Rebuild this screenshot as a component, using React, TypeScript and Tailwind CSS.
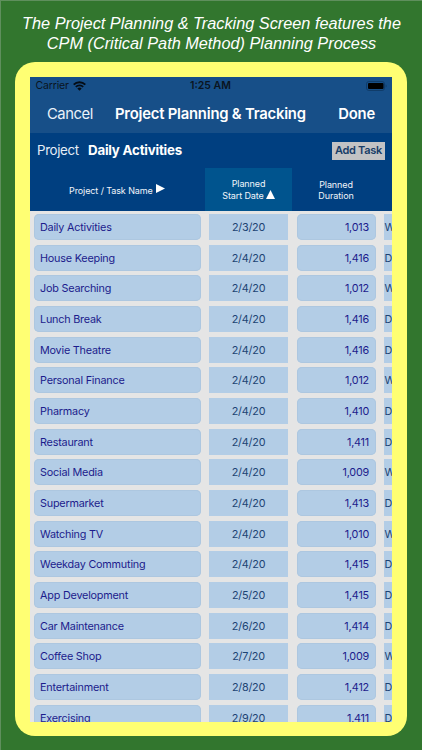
const TASKS = [
  { name: "Daily Activities", start: "2/3/20", duration: "1,013", next: "W" },
  { name: "House Keeping", start: "2/4/20", duration: "1,416", next: "D" },
  { name: "Job Searching", start: "2/4/20", duration: "1,012", next: "W" },
  { name: "Lunch Break", start: "2/4/20", duration: "1,416", next: "D" },
  { name: "Movie Theatre", start: "2/4/20", duration: "1,416", next: "D" },
  { name: "Personal Finance", start: "2/4/20", duration: "1,012", next: "W" },
  { name: "Pharmacy", start: "2/4/20", duration: "1,410", next: "D" },
  { name: "Restaurant", start: "2/4/20", duration: "1,411", next: "D" },
  { name: "Social Media", start: "2/4/20", duration: "1,009", next: "W" },
  { name: "Supermarket", start: "2/4/20", duration: "1,413", next: "D" },
  { name: "Watching TV", start: "2/4/20", duration: "1,010", next: "W" },
  { name: "Weekday Commuting", start: "2/4/20", duration: "1,415", next: "D" },
  { name: "App Development", start: "2/5/20", duration: "1,415", next: "D" },
  { name: "Car Maintenance", start: "2/6/20", duration: "1,414", next: "D" },
  { name: "Coffee Shop", start: "2/7/20", duration: "1,009", next: "W" },
  { name: "Entertainment", start: "2/8/20", duration: "1,412", next: "D" },
  { name: "Exercising", start: "2/9/20", duration: "1,411", next: "D" },
];

export default function App() {
  return (
    <div className="w-[422px] h-[750px] overflow-hidden bg-[#32762e] border-t border-l border-[#5f8f5d] font-['Inter',sans-serif] whitespace-nowrap">
      <h1 className="h-[61px] pt-[12px] text-center text-white italic text-[16.3px] leading-[20px] font-['Liberation_Sans',sans-serif]">
        The Project Planning &amp; Tracking Screen features the
        <br />
        CPM (Critical Path Method) Planning Process
      </h1>

      <div className="ml-[14px] w-[392px] h-[674px] rounded-[20px] bg-[#ffff73] pt-[15px] pl-[15px]">
        <div className="w-[362px] h-[645px] overflow-hidden bg-[#e5e5e5] flex flex-col">
          <StatusBar />
          <NavBar />
          <ProjectBar />
          <TableHeader />
          <div className="pt-[3px] pl-[4px] flex flex-col gap-[4.66px]">
            {TASKS.map((task) => (
              <TaskRow key={task.name} {...task} />
            ))}
          </div>
        </div>
      </div>
    </div>
  );
}

function StatusBar() {
  return (
    <div className="h-[18px] shrink-0 bg-[#174f88] flex items-center text-[#0a1420] text-[10.5px]">
      <div className="w-[160px] flex items-center gap-[4px] pl-[5.5px]">
        <span className="tracking-[-0.15px]">Carrier</span>
        <svg width="13" height="10" viewBox="0 0 13 10" fill="none" stroke="#050c14">
          <path d="M0.7 3.7a8.2 8.2 0 0 1 11.6 0" strokeWidth="1.9" />
          <path d="M2.8 5.9a5.2 5.2 0 0 1 7.4 0" strokeWidth="1.8" />
          <path d="M6.5 9.8 4.3 7.5a3.1 3.1 0 0 1 4.4 0z" fill="#050c14" stroke="none" />
        </svg>
      </div>
      <span className="font-semibold">1:25 AM</span>
      <svg className="ml-auto mr-[5px] -mt-px" width="21" height="10" viewBox="0 0 21 10">
        <rect x="0.5" y="0.5" width="18" height="9" rx="2.4" fill="none" stroke="#103c69" />
        <rect x="2" y="2" width="15.5" height="6" rx="1" fill="#000" />
        <path d="M19.6 3.5v3a1.6 1.6 0 0 0 0-3z" fill="#103c69" />
      </svg>
    </div>
  );
}

function NavBar() {
  return (
    <div className="h-[38px] shrink-0 bg-[#174f88] text-white flex items-center pl-[17px] pr-[17px] text-[14.8px] tracking-[-0.2px]">
      <span className="w-[68px] text-[#eaf2fa] tracking-[-0.45px]">Cancel</span>
      <span className="font-semibold">Project Planning &amp; Tracking</span>
      <span className="ml-auto font-semibold">Done</span>
    </div>
  );
}

function ProjectBar() {
  return (
    <div className="h-[35px] shrink-0 bg-[#003f80] text-white flex items-center pl-[7px] pr-[7px] text-[13.3px]">
      <span className="w-[51px] text-[#e6eef7] tracking-[-0.35px]">Project</span>
      <span className="font-bold tracking-[-0.2px]">Daily Activities</span>
      <button className="ml-auto w-[53px] h-[18px] bg-[#c2c2c4] text-[#173c67] text-[11px] font-semibold tracking-[-0.3px]">
        Add Task
      </button>
    </div>
  );
}

function TableHeader() {
  return (
    <div className="h-[43px] shrink-0 bg-[#003f80] text-[#f0f5fa] text-[9px] leading-[11px] tracking-[-0.1px] flex">
      <div className="w-[175px] flex items-center pt-px pl-[39px] gap-[3px]">
        <span>Project / Task Name</span>
        <svg className="-mt-[3px]" width="9" height="9" viewBox="0 0 9 9">
          <path d="M0 0 9 4.5 0 9z" fill="#fff" />
        </svg>
      </div>
      <div className="w-[87px] bg-[#00548e] flex flex-col items-center justify-center gap-[1px]">
        <span>Planned</span>
        <span className="flex items-center gap-[2px]">
          Start Date
          <svg className="-mt-[2px]" width="9" height="9" viewBox="0 0 9 9">
            <path d="M4.5 0 9 9H0z" fill="#fff" />
          </svg>
        </span>
      </div>
      <div className="w-[88px] flex flex-col items-center justify-center">
        <span>Planned</span>
        <span>Duration</span>
      </div>
    </div>
  );
}

function TaskRow({
  name,
  start,
  duration,
  next,
}: {
  name: string;
  start: string;
  duration: string;
  next: string;
}) {
  return (
    <div className="h-[26px] shrink-0 flex text-[10.8px] leading-[27.5px] text-[#1c4373] tracking-[-0.2px]">
      <div className="w-[167px] shrink-0 rounded-[5px] bg-[#b3cde6] shadow-[inset_0_0_0_1px_#adc7e0] pl-[6px] text-[#1c1c8c]">
        {name}
      </div>
      <div className="ml-[8px] w-[79px] shrink-0 bg-[#b3cde6] text-center">{start}</div>
      <div className="ml-[8.5px] w-[79.5px] shrink-0 rounded-[5px] bg-[#b3cde6] shadow-[inset_0_0_0_1px_#adc7e0] pr-[7px] text-right text-[#1c1c8c]">
        {duration}
      </div>
      <div className="ml-[8px] w-[12px] shrink-0 bg-[#b3cde6] pl-[0.5px]">{next}</div>
    </div>
  );
}
